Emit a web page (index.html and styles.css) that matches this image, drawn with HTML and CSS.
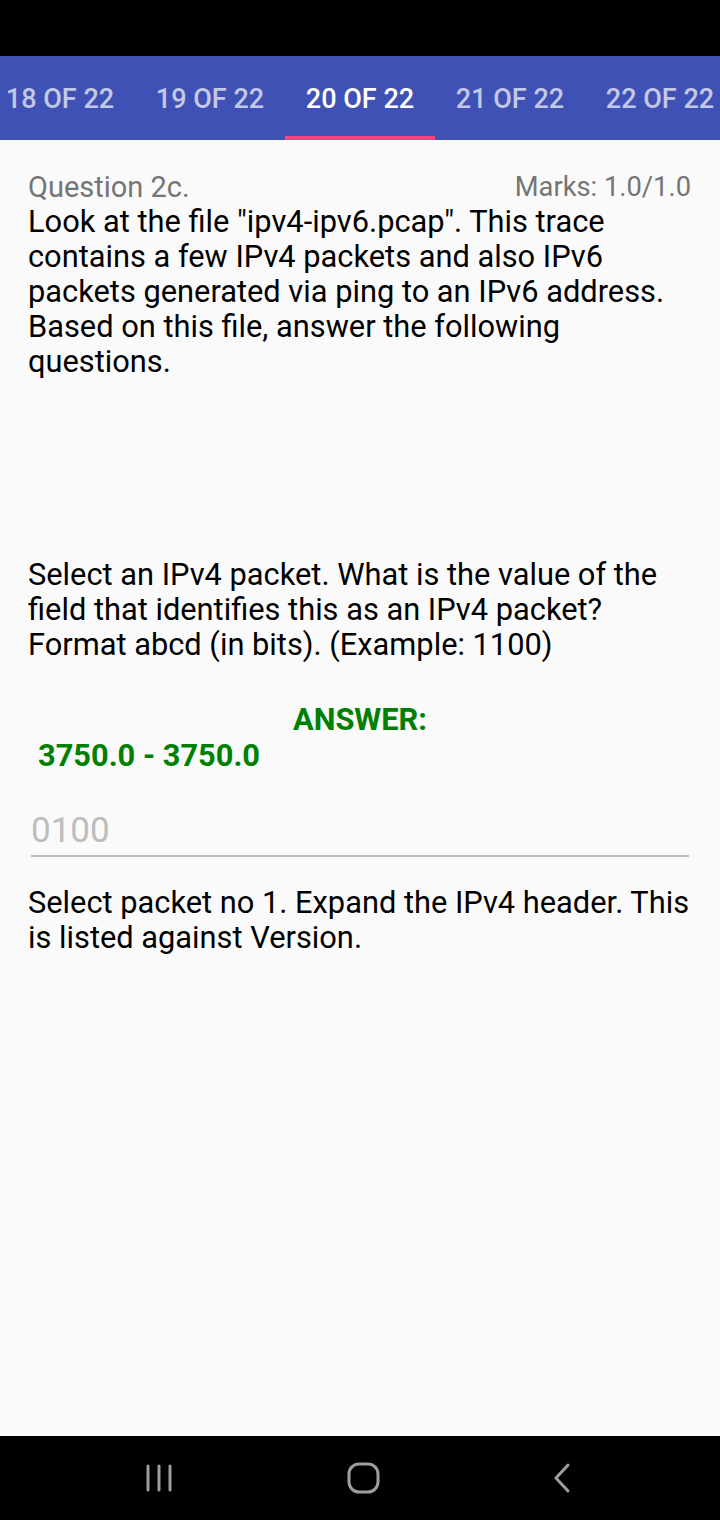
FILE: index.html
```html
<!DOCTYPE html>
<html>
<head>
<meta charset="utf-8">
<link rel="stylesheet" href="styles.css">
</head>
<body>
<div class="screen">
  <div class="statusbar"></div>
  <div class="tabbar">
    <div class="tabs">
      <div class="tab">18 OF 22</div>
      <div class="tab">19 OF 22</div>
      <div class="tab active">20 OF 22</div>
      <div class="tab">21 OF 22</div>
      <div class="tab">22 OF 22</div>
    </div>
  </div>
  <main class="content">
    <div class="qhead">
      <span class="qtitle">Question 2c.</span>
      <span class="marks">Marks: 1.0/1.0</span>
    </div>
    <p class="body intro">Look at the file "ipv4-ipv6.pcap". This trace contains a few IPv4 packets and also IPv6 packets generated via ping to an IPv6 address. Based on this file, answer the following questions.</p>
    <p class="body question">Select an IPv4 packet. What is the value of the field that identifies this as an IPv4 packet? Format abcd (in bits). (Example: 1100)</p>
    <div class="answer-label">ANSWER:</div>
    <div class="answer-range">3750.0 - 3750.0</div>
    <div class="input">0100</div>
    <p class="body feedback">Select packet no 1. Expand the IPv4 header. This is listed against Version.</p>
  </main>
  <div class="navbar">
    <svg class="nav-icon" width="30" height="30" viewBox="0 0 30 30"><g stroke="#9e9e9e" stroke-width="3" stroke-linecap="round"><line x1="3" y1="3" x2="3" y2="27"/><line x1="14" y1="3" x2="14" y2="27"/><line x1="25" y1="3" x2="25" y2="27"/></g></svg>
    <svg class="nav-icon" width="34" height="34" viewBox="0 0 34 34"><rect x="2" y="3" width="29" height="28" rx="10" fill="none" stroke="#9e9e9e" stroke-width="3"/></svg>
    <svg class="nav-icon" width="20" height="32" viewBox="0 0 20 32"><polyline points="16,3 4,16 16,29" fill="none" stroke="#9e9e9e" stroke-width="3" stroke-linecap="round" stroke-linejoin="round"/></svg>
  </div>
</div>
</body>
</html>
```
FILE: styles.css
```css
* { box-sizing: border-box; }
html, body { margin: 0; padding: 0; }
body { font-family: Roboto, "Noto Sans", sans-serif; background: #000; }
.screen { width: 720px; height: 1520px; display: flex; flex-direction: column; background: #fafafa; }
.statusbar { height: 56px; background: #000; flex: none; }
.tabbar { height: 84px; background: #3f51b5; flex: none; overflow: hidden; }
.tabs { display: flex; margin-left: -15px; height: 100%; }
.tab { width: 150px; flex: none; display: flex; align-items: center; justify-content: center; color: rgba(255,255,255,0.7); font-size: 27px; font-weight: 500; height: 100%; padding-top: 2px; }
.tab.active { color: #fff; box-shadow: inset 0 -4px 0 #ff4081; }
.content { flex: 1; padding: 30px 25px 0 28px; color: #000; }
.qhead { display: flex; justify-content: space-between; align-items: center; color: #757575; line-height: 34px; margin-right: 4px; }
.qtitle { font-size: 29px; }
.marks { font-size: 27.3px; }
.body { margin: 0; font-size: 30.8px; line-height: 35px; }
.intro { margin-bottom: 178px; }
.question { margin-bottom: 40px; }
.answer-label { text-align: center; color: #008000; font-weight: 700; font-size: 30.8px; line-height: 36px; margin-right: 3px; }
.answer-range { color: #008000; font-weight: 700; font-size: 30.8px; line-height: 36px; padding-left: 10px; }
.input { margin: 39px 6px 0 3px; color: #bdbdbd; font-size: 35px; line-height: 36px; padding-bottom: 6px; border-bottom: 2px solid #bdbdbd; }
.feedback { margin-top: 28px; }
.navbar { height: 84px; flex: none; background: #000; display: flex; align-items: center; justify-content: space-between; padding: 0 148px 0 145px; }
.nav-icon { display: block; }
```
